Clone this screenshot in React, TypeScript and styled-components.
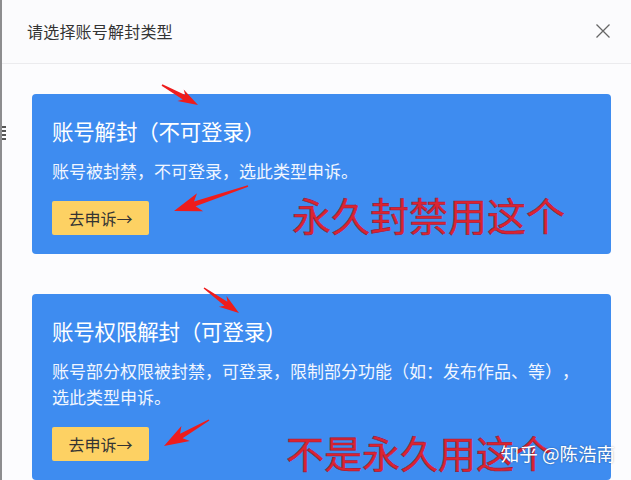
import styled, { createGlobalStyle } from 'styled-components'

const GlobalStyle = createGlobalStyle`
  html, body {
    margin: 0;
    padding: 0;
    background: #fbfbfd;
  }
  * { box-sizing: border-box; }
`

const FONT = `"Noto Sans CJK SC", "Microsoft YaHei", "Noto Sans", sans-serif`

const Page = styled.div`
  position: relative;
  width: 631px;
  height: 480px;
  overflow: hidden;
  background: #fcfcfe;
  border-left: 2px solid #8d8d8f;
  font-family: ${FONT};
  text-spacing-trim: space-all;
`

const EdgeMarks = styled.div`
  position: absolute;
  left: 0;
  top: 126px;
  width: 4px;
  height: 14px;
  background: repeating-linear-gradient(to bottom, #555 0 2px, transparent 2px 4px);
`

const Header = styled.div`
  display: flex;
  align-items: center;
  justify-content: space-between;
  height: 64px;
  padding: 0 20px 0 25px;
  border-bottom: 1px solid #ebebee;
  background: #fbfbfd;
`

const Title = styled.div`
  font-size: 16px;
  color: #333;
  letter-spacing: 0.2px;
  margin-top: -2px;
`

const Close = styled.button`
  border: none;
  background: none;
  padding: 0;
  width: 16px;
  height: 16px;
  display: flex;
  margin-top: -1px;
`

const Body = styled.div`
  display: flex;
  flex-direction: column;
  gap: 40px;
  padding: 30px 20px 0 30px;
`

const Card = styled.div`
  position: relative;
  background: #3e8cf0;
  border-radius: 4px;
  padding: 22px 20px 19px 20px;
  color: #fff;
  display: flex;
  flex-direction: column;
  align-items: flex-start;
`

const CardTitle = styled.div`
  font-size: 21.5px;
  line-height: 30px;
  letter-spacing: -0.2px;
`

const CardDesc = styled.div`
  margin-top: 12px;
  font-size: 17px;
  line-height: 26px;
  color: #f1f6ff;
  width: 100%;
`

const AppealButton = styled.button`
  margin-top: 17px;
  width: 97px;
  height: 34px;
  border: none;
  border-radius: 2px;
  background: #fdd163;
  color: #333;
  font-family: ${FONT};
  font-size: 16px;
  padding: 0;
  display: flex;
  align-items: center;
  justify-content: center;
`

const Note = styled.div<{ $left: number; $top: number; $size: number }>`
  position: absolute;
  left: ${({ $left }) => $left}px;
  top: ${({ $top }) => $top}px;
  font-size: ${({ $size }) => $size}px;
  line-height: 1;
  color: #dc2430;
  -webkit-text-stroke: 0.6px #9c1c3c;
  white-space: nowrap;
`

const Watermark = styled.div`
  position: absolute;
  right: 16px;
  bottom: 16px;
  font-size: 18.5px;
  line-height: 22px;
  color: #fff;
  text-shadow: 0 0 2px rgba(0, 0, 0, 0.35);
  white-space: nowrap;
`

const Overlay = styled.svg`
  position: absolute;
  left: 0;
  top: 0;
  pointer-events: none;
`

type Pt = [number, number]

function arrowPoints(tail: Pt, tip: Pt, headLen: number, headW: number, w0: number, w1: number) {
  const dx = tip[0] - tail[0]
  const dy = tip[1] - tail[1]
  const len = Math.hypot(dx, dy)
  const ux = dx / len
  const uy = dy / len
  const nx = -uy
  const ny = ux
  const bx = tip[0] - ux * headLen
  const by = tip[1] - uy * headLen
  const back = headLen * 0.25
  const pts: Pt[] = [
    [tail[0] + nx * w0 / 2, tail[1] + ny * w0 / 2],
    [bx + nx * w1 / 2, by + ny * w1 / 2],
    [bx - ux * back + nx * headW / 2, by - uy * back + ny * headW / 2],
    tip,
    [bx - ux * back - nx * headW / 2, by - uy * back - ny * headW / 2],
    [bx - nx * w1 / 2, by - ny * w1 / 2],
    [tail[0] - nx * w0 / 2, tail[1] - ny * w0 / 2],
  ]
  return pts.map((p) => `${p[0].toFixed(1)},${p[1].toFixed(1)}`).join(' ')
}

const arrows: { tail: Pt; tip: Pt; head: number; w: number }[] = [
  { tail: [160, 85], tip: [196, 105], head: 16, w: 13 },
  { tail: [246, 186], tip: [172, 211], head: 22, w: 19 },
  { tail: [202, 288], tip: [237, 313], head: 16, w: 13 },
  { tail: [207, 420], tip: [162, 446], head: 20, w: 17 },
]

function CloseIcon() {
  return (
    <svg width="16" height="16" viewBox="0 0 16 16">
      <path d="M1.5 1.5 L14.5 14.5 M14.5 1.5 L1.5 14.5" stroke="#666" strokeWidth="1.3" fill="none" />
    </svg>
  )
}

export default function App() {
  return (
    <>
      <GlobalStyle />
      <Page lang="zh-CN">
        <EdgeMarks />
        <Header>
          <Title>请选择账号解封类型</Title>
          <Close aria-label="关闭">
            <CloseIcon />
          </Close>
        </Header>
        <Body>
          <Card>
            <CardTitle>账号解封（不可登录）</CardTitle>
            <CardDesc>账号被封禁，不可登录，选此类型申诉。</CardDesc>
            <AppealButton>去申诉→</AppealButton>
            <Note $left={260} $top={101} $size={39}>永久封禁用这个</Note>
          </Card>
          <Card>
            <CardTitle>账号权限解封（可登录）</CardTitle>
            <CardDesc>账号部分权限被封禁，可登录，限制部分功能（如：发布作品、等），选此类型申诉。</CardDesc>
            <AppealButton>去申诉→</AppealButton>
            <Note $left={254} $top={139} $size={38}>不是永久用这个</Note>
          </Card>
        </Body>
        <Watermark>知乎 @陈浩南</Watermark>
        <Overlay width="631" height="480" viewBox="0 0 631 480">
          {arrows.map((a, i) => (
            <polygon key={i} points={arrowPoints(a.tail, a.tip, a.head, a.w, 1.5, 5)} fill="#ee1c1c" />
          ))}
        </Overlay>
      </Page>
    </>
  )
}
